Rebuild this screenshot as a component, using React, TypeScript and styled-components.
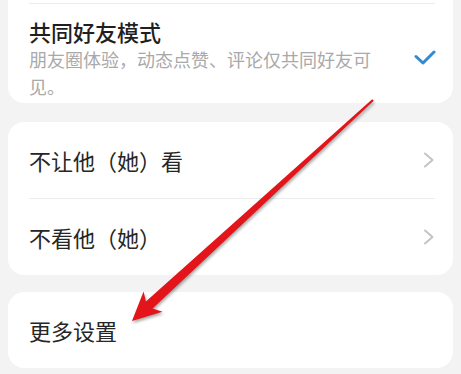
import React from "react";
import styled, { createGlobalStyle } from "styled-components";

const GlobalStyle = createGlobalStyle`
  html, body {
    margin: 0;
    padding: 0;
    background: #f3f3f3;
  }
  body {
    font-family: "Noto Sans CJK SC", "Noto Sans", sans-serif;
  }
`;

const Page = styled.div`
  position: relative;
  height: 374px;
  overflow: hidden;
  background: #f3f3f3;
  padding: 0 8px;
  display: flex;
  flex-direction: column;
`;

const Card = styled.section<{ $clippedTop?: boolean; $gapAfter?: number }>`
  background: #ffffff;
  border-radius: ${(p) => (p.$clippedTop ? "0 0 16px 16px" : "16px")};
  margin-bottom: ${(p) => p.$gapAfter ?? 0}px;
  display: flex;
  flex-direction: column;
`;

const Stub = styled.div`
  height: 3px;
`;

const Divider = styled.div`
  height: 1px;
  background: #ececec;
  margin: 0 18px 0 21px;
`;

const ItemRow = styled.div<{ $height?: number }>`
  display: flex;
  align-items: center;
  justify-content: space-between;
  padding: 0 17px 0 21px;
  height: ${(p) => (p.$height ? `${p.$height}px` : "auto")};
`;

const TallRow = styled(ItemRow)`
  padding-top: 12px;
  padding-bottom: 3px;
`;

const TextCol = styled.div`
  display: flex;
  flex-direction: column;
  width: 352px;
`;

const Title = styled.div`
  font-size: 22px;
  line-height: 30px;
  font-weight: 500;
  color: #1f1f1f;
`;

const Subtitle = styled.div`
  font-size: 18px;
  line-height: 27px;
  color: #a9a9a9;
`;

const Label = styled.div`
  font-size: 22px;
  line-height: 30px;
  color: #262626;
`;

const Icon = styled.svg`
  display: block;
  flex: none;
`;

const Overlay = styled.svg`
  position: absolute;
  left: 0;
  top: 0;
  pointer-events: none;
  filter: drop-shadow(1.5px 2px 1.5px rgba(0, 0, 0, 0.35));
`;

const Check = () => (
  <Icon width="24" height="18" viewBox="0 0 24 18">
    <polyline
      points="4,7.5 11,14 22,3"
      fill="none"
      stroke="#2e8bd4"
      strokeWidth="3"
      strokeLinecap="round"
      strokeLinejoin="round"
    />
  </Icon>
);

const Chevron = () => (
  <Icon width="14" height="16" viewBox="0 0 14 16">
    <polyline
      points="3,1.5 10.5,8 3,14.5"
      fill="none"
      stroke="#c4c4c4"
      strokeWidth="2"
      strokeLinecap="round"
      strokeLinejoin="round"
    />
  </Icon>
);

const Arrow = () => (
  <Overlay width="461" height="374" viewBox="0 0 461 374">
    <polygon
      points="132,321 162.5,311.8 152.6,308.6 373.8,100.8 372.2,99.2 145.9,301.5 143.6,291.5"
      fill="#e3141a"
    />
  </Overlay>
);

export default function App() {
  return (
    <>
      <GlobalStyle />
      <Page>
        <Card $clippedTop $gapAfter={19}>
          <Stub />
          <Divider />
          <TallRow>
            <TextCol>
              <Title>共同好友模式</Title>
              <Subtitle>朋友圈体验，动态点赞、评论仅共同好友可见。</Subtitle>
            </TextCol>
            <Check />
          </TallRow>
        </Card>
        <Card $gapAfter={17}>
          <ItemRow $height={76}>
            <Label>不让他（她）看</Label>
            <Chevron />
          </ItemRow>
          <Divider />
          <ItemRow $height={76}>
            <Label>不看他（她）</Label>
            <Chevron />
          </ItemRow>
        </Card>
        <Card>
          <ItemRow $height={76}>
            <Label>更多设置</Label>
          </ItemRow>
        </Card>
        <Arrow />
      </Page>
    </>
  );
}
